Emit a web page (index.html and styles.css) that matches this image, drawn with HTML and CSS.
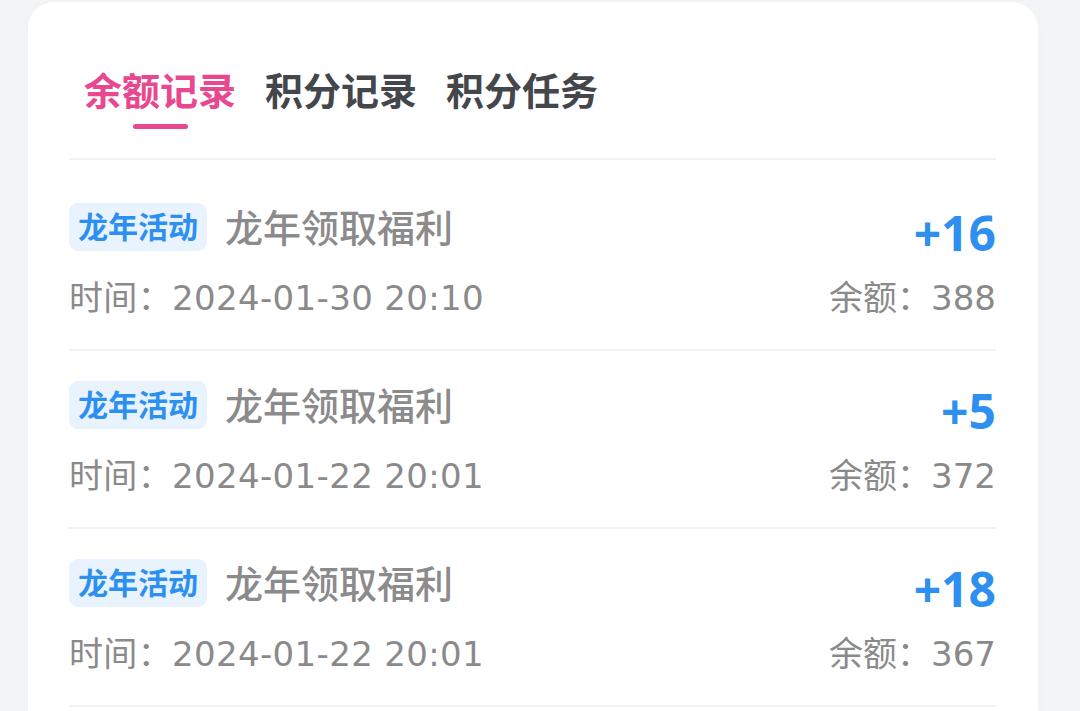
FILE: index.html
```html
<!DOCTYPE html>
<html lang="zh-CN">
<head>
<meta charset="utf-8">
<link rel="stylesheet" href="styles.css">
</head>
<body>
<div class="card">
  <div class="tabs">
    <div class="tab active"><span class="tab-label">余额记录</span><span class="underline"></span></div>
    <div class="tab"><span class="tab-label">积分记录</span></div>
    <div class="tab"><span class="tab-label">积分任务</span></div>
  </div>
  <div class="list">
    <div class="row">
      <div class="line1">
        <div class="left"><span class="badge">龙年活动</span><span class="title">龙年领取福利</span></div>
        <div class="amount">+16</div>
      </div>
      <div class="line2">
        <span class="time">时间：2024-01-30 20:10</span>
        <span class="balance">余额：388</span>
      </div>
    </div>
    <div class="row">
      <div class="line1">
        <div class="left"><span class="badge">龙年活动</span><span class="title">龙年领取福利</span></div>
        <div class="amount">+5</div>
      </div>
      <div class="line2">
        <span class="time">时间：2024-01-22 20:01</span>
        <span class="balance">余额：372</span>
      </div>
    </div>
    <div class="row">
      <div class="line1">
        <div class="left"><span class="badge">龙年活动</span><span class="title">龙年领取福利</span></div>
        <div class="amount">+18</div>
      </div>
      <div class="line2">
        <span class="time">时间：2024-01-22 20:01</span>
        <span class="balance">余额：367</span>
      </div>
    </div>
  </div>
</div>
</body>
</html>
```

FILE: styles.css
```css
html, body {
  margin: 0;
  padding: 0;
  background: #f3f4f6;
  font-family: "Noto Sans", "Noto Sans CJK SC", sans-serif;
  overflow: hidden;
}

.card {
  margin: 2px 42px 0 28px;
  background: #ffffff;
  border-radius: 26px 26px 0 0;
  padding: 0 42px 0 41px;
  height: 720px;
  box-shadow: 0 0 12px rgba(0, 0, 0, 0.02);
}

.tabs {
  display: flex;
  gap: 29px;
  padding: 64px 0 0 15px;
  height: 92px;
  border-bottom: 2px solid #f1f2f4;
}

.tab {
  display: flex;
  flex-direction: column;
  align-items: center;
}

.tab-label {
  font-size: 38px;
  line-height: 48px;
  font-weight: 700;
  color: #43464b;
}

.tab.active .tab-label {
  color: #e8488f;
}

.underline {
  margin-top: 10px;
  width: 55px;
  height: 5px;
  border-radius: 3px;
  background: #e8488f;
}

.list {
  padding-top: 11px;
}

.row {
  padding: 32px 0 26px;
  border-bottom: 2px solid #f1f2f4;
}

.row + .row {
  padding-top: 30px;
}

.line1 {
  display: flex;
  justify-content: space-between;
  align-items: flex-start;
  height: 48px;
}

.left {
  display: flex;
  align-items: center;
}

.badge {
  display: inline-block;
  height: 48px;
  line-height: 48px;
  padding: 0 9px;
  border-radius: 9px;
  background: #e8f3fe;
  color: #2d8ff0;
  font-size: 30px;
  font-weight: 700;
}

.title {
  margin-left: 18px;
  font-size: 38px;
  line-height: 48px;
  font-weight: 500;
  color: #8b8b8b;
}

.amount {
  margin-top: 6px;
  font-size: 48px;
  line-height: 48px;
  font-weight: 700;
  color: #2d8ff0;
}

.line2 {
  display: flex;
  justify-content: space-between;
  margin-top: 22px;
  height: 50px;
  line-height: 50px;
  font-family: "DejaVu Sans", "Noto Sans CJK SC", sans-serif;
  font-size: 34px;
  color: #8a8a8a;
}

.time {
  letter-spacing: 0.35px;
}
```
